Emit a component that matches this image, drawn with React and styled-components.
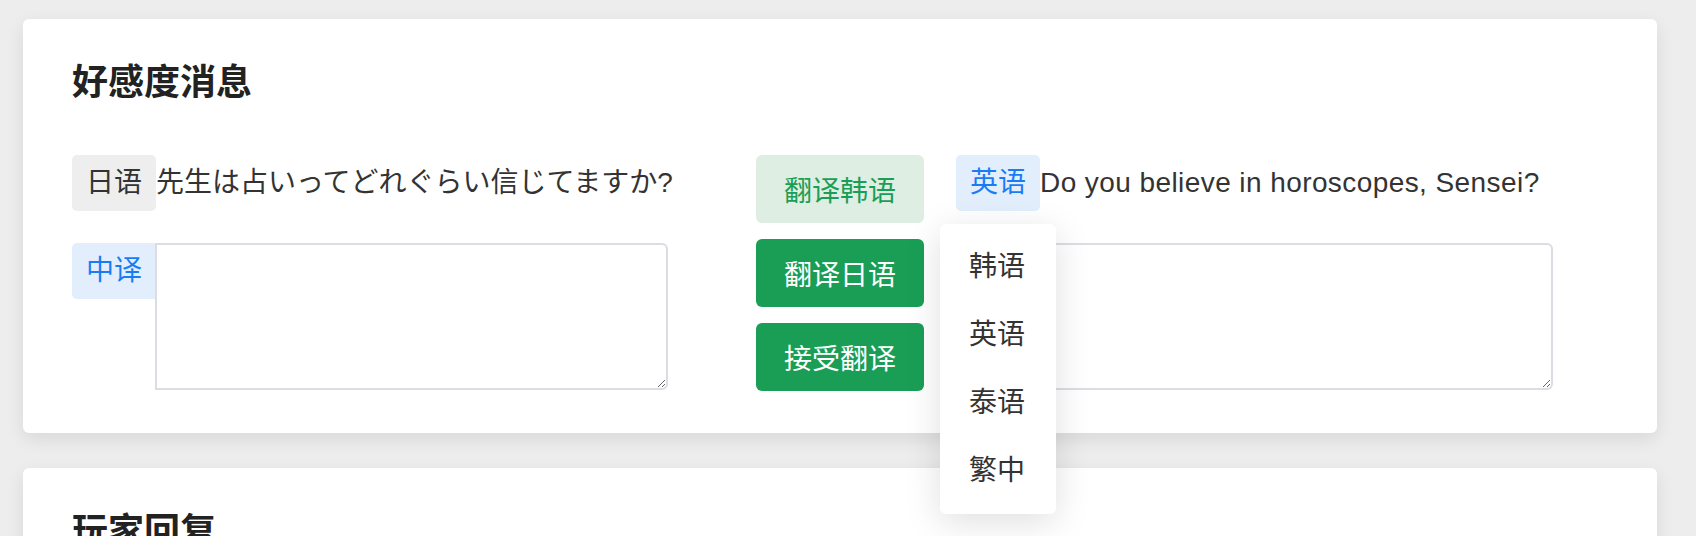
import React from 'react';
import styled, { createGlobalStyle } from 'styled-components';

const GlobalStyle = createGlobalStyle`
  html, body {
    margin: 0;
    padding: 0;
    background: #ededed;
    font-family: "Liberation Sans", "Noto Sans CJK SC", sans-serif;
    color: #333;
  }
`;

// 页面
const Page = styled.div`
  padding: 19px 39px 0 23px;
  height: 536px;
  box-sizing: border-box;
  overflow: hidden;
`;

// 卡片
const Card = styled.section`
  background: #fff;
  border-radius: 6px;
  box-shadow: 0 6px 18px rgba(0, 0, 0, 0.09);
  padding: 38px 50px 42px 49px;
  margin-bottom: 35px;
`;

const Title = styled.h2`
  margin: 0;
  font-size: 36px;
  line-height: 52px;
  font-weight: 700;
  color: #222;
`;

const Body = styled.div`
  display: flex;
  align-items: flex-start;
  margin-top: 46px;
`;

const Column = styled.div`
  width: ${p => p.$width}px;
  display: flex;
  flex-direction: column;
  gap: 32px;
`;

const Line = styled.div`
  display: flex;
  align-items: ${p => (p.$top ? 'flex-start' : 'center')};
`;

// 语言标签
const Tag = styled.span`
  flex: none;
  font-size: 28px;
  line-height: 42px;
  padding: 7px 14px;
  border-radius: ${p => (p.$joined ? '5px 0 0 5px' : '5px')};
  background: ${p => (p.$blue ? '#e3eefd' : '#eeeeee')};
  color: ${p => (p.$blue ? '#1a7cf5' : '#333')};
  visibility: ${p => (p.$hidden ? 'hidden' : 'visible')};
`;

const Sentence = styled.span`
  font-size: 28px;
  line-height: 42px;
  color: #333;
  white-space: nowrap;
  letter-spacing: ${p => (p.$latin ? '0.42px' : '0')};
`;

const Input = styled.textarea`
  width: 514px;
  height: 147px;
  box-sizing: border-box;
  margin: 0 0 0 -1px;
  border: 2px solid #dcdce3;
  border-radius: 0 6px 6px 0;
  background: #fff;
  font-family: inherit;
  font-size: 28px;
  outline: none;
`;

// 中间按钮
const Actions = styled.div`
  position: relative;
  margin-left: 88px;
  margin-right: 32px;
  width: 168px;
  display: flex;
  flex-direction: column;
  gap: 16px;
`;

const Button = styled.button`
  height: 68px;
  border: none;
  border-radius: 6px;
  font-family: inherit;
  font-size: 28px;
  cursor: pointer;
  background: ${p => (p.$light ? '#deeee3' : '#1a9e56')};
  color: ${p => (p.$light ? '#1a9e56' : '#fff')};
`;

// 下拉菜单
const Menu = styled.ul`
  position: absolute;
  left: 184px;
  top: 69px;
  z-index: 10;
  width: 116px;
  margin: 0;
  padding: 9px 0;
  list-style: none;
  background: #fff;
  border-radius: 6px;
  box-shadow: 0 8px 36px rgba(0, 0, 0, 0.13);
`;

const MenuItem = styled.li`
  font-size: 28px;
  line-height: 42px;
  padding: 13px 0 13px 29px;
  color: #333;
`;

const App = () => (
  <Page>
    <GlobalStyle />
    <Card>
      <Title>好感度消息</Title>
      <Body>
        <Column $width={596}>
          <Line>
            <Tag>日语</Tag>
            <Sentence>先生は占いってどれぐらい信じてますか?</Sentence>
          </Line>
          <Line $top>
            <Tag $blue $joined>中译</Tag>
            <Input />
          </Line>
        </Column>
        <Actions>
          <Button $light>翻译韩语</Button>
          <Button>翻译日语</Button>
          <Button>接受翻译</Button>
          <Menu>
            <MenuItem>韩语</MenuItem>
            <MenuItem>英语</MenuItem>
            <MenuItem>泰语</MenuItem>
            <MenuItem>繁中</MenuItem>
          </Menu>
        </Actions>
        <Column $width={597}>
          <Line>
            <Tag $blue>英语</Tag>
            <Sentence $latin>Do you believe in horoscopes, Sensei?</Sentence>
          </Line>
          <Line $top>
            <Tag $blue $joined $hidden>英译</Tag>
            <Input />
          </Line>
        </Column>
      </Body>
    </Card>
    <Card>
      <Title>玩家回复</Title>
    </Card>
  </Page>
);

export default App;
